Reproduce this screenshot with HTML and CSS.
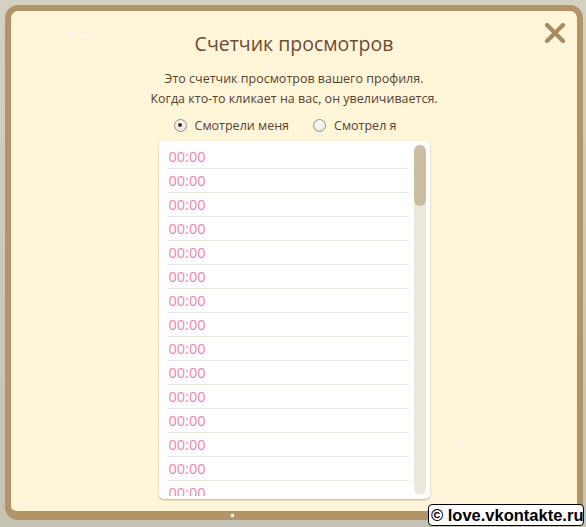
FILE: index.html
```html
<!DOCTYPE html>
<html>
<head>
<meta charset="utf-8">
<link rel="stylesheet" href="styles.css">
</head>
<body>
<div class="dialog">
  <h1 class="title">Счетчик просмотров</h1>
  <p class="desc">Это счетчик просмотров вашего профиля.<br>Когда кто-то кликает на вас, он увеличивается.</p>
  <div class="tabs">
    <label class="radio"><span class="dot on"></span>Смотрели меня</label>
    <label class="radio"><span class="dot"></span>Смотрел я</label>
  </div>
  <div class="listbox">
    <ul class="list">
      <li>00:00</li><li>00:00</li><li>00:00</li><li>00:00</li><li>00:00</li>
      <li>00:00</li><li>00:00</li><li>00:00</li><li>00:00</li><li>00:00</li>
      <li>00:00</li><li>00:00</li><li>00:00</li><li>00:00</li><li>00:00</li>
    </ul>
    <div class="scroll"><div class="thumb"></div></div>
  </div>
  <svg class="close" width="22" height="20" viewBox="0 0 22 20"><path d="M3 2 L19 18 M19 2 L3 18" stroke="#a98b5f" stroke-width="4.2" stroke-linecap="round"/></svg>
  <span class="snow" style="left:52px;top:7px"></span>
  <span class="snow" style="left:102px;top:7px"></span>
  <span class="snow" style="left:57px;top:20px"></span>
  <span class="snow" style="left:74px;top:24px"></span>
  <span class="snow" style="left:20px;top:200px"></span>
  <span class="snow" style="left:45px;top:472px"></span>
  <span class="snow" style="left:220px;top:503px"></span>
  <span class="snow" style="left:445px;top:48px"></span>
  <span class="snow" style="left:446px;top:430px"></span>
</div>
<div class="mark">© love.vkontakte.ru</div>
</body>
</html>
```
FILE: styles.css
```css
html, body {
  margin: 0;
  padding: 0;
}
body {
  width: 586px;
  height: 527px;
  overflow: hidden;
  background: linear-gradient(#d3d0c4, #c6c2b4);
  position: relative;
  font-family: "Open Sans", "Noto Sans", sans-serif;
}
.dialog {
  position: relative;
  box-sizing: border-box;
  margin: 5px 3px 0 5px;
  width: 578px;
  height: 515px;
  background: #fff5d9;
  border: 6px solid #b39468;
  border-bottom-width: 9px;
  border-radius: 13px;
  display: flex;
  flex-direction: column;
  align-items: center;
}
.title {
  margin: 19px 0 0;
  font-size: 19.5px;
  line-height: 28px;
  font-weight: 400;
  color: #6e4b36;
}
.desc {
  margin: 11px 0 0;
  font-size: 12.5px;
  line-height: 20px;
  color: #5b4132;
  text-align: center;
}
.tabs {
  margin-top: 6px;
  display: flex;
  gap: 24px;
  height: 20px;
  align-items: center;
  padding-right: 18px;
}
.radio {
  display: flex;
  align-items: center;
  gap: 8px;
  font-size: 12.5px;
  color: #5b4132;
}
.dot {
  width: 11px;
  height: 11px;
  border-radius: 50%;
  border: 1px solid #9a9488;
  background: radial-gradient(circle at 50% 35%, #ffffff, #e2ded4);
  display: flex;
  align-items: center;
  justify-content: center;
}
.dot.on::after {
  content: "";
  width: 4px;
  height: 4px;
  border-radius: 50%;
  background: #3a3028;
}
.listbox {
  margin-top: 6px;
  box-sizing: border-box;
  width: 271px;
  height: 358px;
  background: #fff;
  border-radius: 5px;
  box-shadow: 0 1px 2px rgba(120, 100, 60, 0.45);
  display: flex;
  padding: 4px 3px 3px 8px;
  gap: 5px;
  overflow: hidden;
}
.list {
  list-style: none;
  margin: 0;
  padding: 0;
  width: 242px;
  overflow: hidden;
}
.list li {
  height: 23px;
  line-height: 24px;
  border-bottom: 1px solid #ece8dc;
  color: #ef86aa;
  font-size: 14.5px;
  padding-left: 2px;
}
.scroll {
  width: 12px;
  height: 350px;
  background: #ebe8dc;
  border-radius: 6px;
}
.thumb {
  height: 61px;
  background: #cbbd9f;
  border-radius: 6px;
}
.close {
  position: absolute;
  right: 11px;
  top: 12px;
}
.snow {
  position: absolute;
  width: 3px;
  height: 3px;
  border-radius: 50%;
  background: #ffffff;
  box-shadow: 0 0 2px #fff;
}
.mark {
  position: absolute;
  left: 428px;
  top: 504px;
  width: 156px;
  box-sizing: border-box;
  height: 22px;
  background: #fff;
  border: 1px solid #000;
  border-radius: 4px;
  font-family: "Liberation Sans", Arial, sans-serif;
  font-weight: 700;
  font-size: 16.5px;
  line-height: 20px;
  color: #000;
  padding-left: 2px;
  white-space: nowrap;
}
```
